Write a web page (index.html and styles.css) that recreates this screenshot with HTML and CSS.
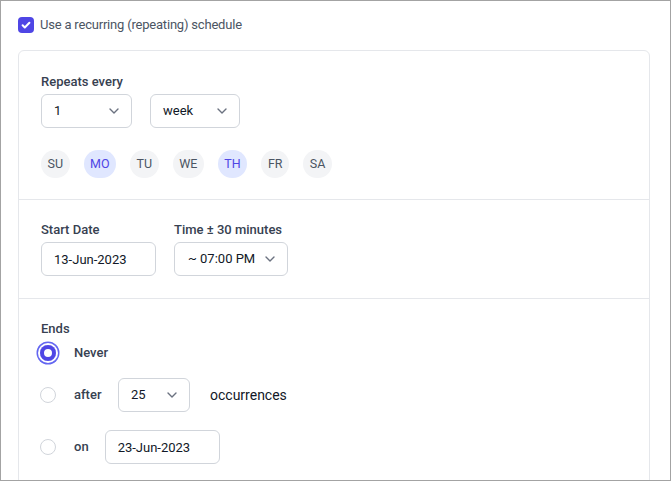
FILE: index.html
```html
<!DOCTYPE html>
<html lang="en">

<head>
  <meta charset="UTF-8">
  <meta name="viewport" content="width=device-width, initial-scale=1.0">
  <title>Recurring Schedule</title>
  <link rel="stylesheet" href="styles.css">
</head>

<body>
  <div class="frame">

    <label class="recurring">
      <span class="checkbox">
        <svg viewBox="0 0 16 16" width="16" height="16">
          <path d="M4.6 8.3l2.2 2.2 4.6-4.7" fill="none" stroke="#fff" stroke-width="2" stroke-linecap="round" stroke-linejoin="round" />
        </svg>
      </span>
      Use a recurring (repeating) schedule
    </label>

    <div class="card">

      <section class="block block-repeat">
        <div class="label">Repeats every</div>
        <div class="row">
          <div class="select select-count">
            <span>1</span>
            <svg class="chevron" viewBox="0 0 10 6" width="10" height="6"><path d="M1 1l4 4 4-4" /></svg>
          </div>
          <div class="select select-unit">
            <span>week</span>
            <svg class="chevron" viewBox="0 0 10 6" width="10" height="6"><path d="M1 1l4 4 4-4" /></svg>
          </div>
        </div>
        <div class="days">
          <span class="day">SU</span>
          <span class="day active">MO</span>
          <span class="day">TU</span>
          <span class="day">WE</span>
          <span class="day active">TH</span>
          <span class="day">FR</span>
          <span class="day">SA</span>
        </div>
      </section>

      <section class="block block-start">
        <div class="row">
          <div class="field">
            <div class="label">Start Date</div>
            <input class="input input-date" type="text" value="13-Jun-2023" />
          </div>
          <div class="field">
            <div class="label">Time ± 30 minutes</div>
            <div class="select select-time">
              <span>~ 07:00 PM</span>
              <svg class="chevron" viewBox="0 0 10 6" width="10" height="6"><path d="M1 1l4 4 4-4" /></svg>
            </div>
          </div>
        </div>
      </section>

      <section class="block block-ends">
        <div class="label">Ends</div>

        <div class="option option-never">
          <span class="radio checked"></span>
          <span class="option-text">Never</span>
        </div>

        <div class="option option-after">
          <span class="radio"></span>
          <span class="option-text">after</span>
          <div class="select select-times">
            <span>25</span>
            <svg class="chevron" viewBox="0 0 10 6" width="10" height="6"><path d="M1 1l4 4 4-4" /></svg>
          </div>
          <span class="suffix">occurrences</span>
        </div>

        <div class="option option-on">
          <span class="radio"></span>
          <span class="option-text">on</span>
          <input class="input input-date" type="text" value="23-Jun-2023" />
        </div>
      </section>

    </div>

  </div>
</body>

</html>
```

FILE: styles.css
```css
* {
  padding: 0;
  margin: 0;
  box-sizing: border-box;
}

body {
  font-family: Roboto, "Liberation Sans", sans-serif;
  font-size: 13px;
  line-height: 20px;
  color: #374151;
  background-color: white;
}

.frame {
  width: 671px;
  height: 481px;
  border: 1px solid #a3a3a3;
  padding: 16px 0 0 17px;
  overflow: hidden;
}

.recurring {
  display: flex;
  align-items: center;
  gap: 6px;
  height: 16px;
  color: #4b5563;
  letter-spacing: -0.2px;
}

.checkbox {
  display: flex;
  width: 16px;
  height: 16px;
  border-radius: 4px;
  background-color: #4f46e5;
}

.card {
  width: 632px;
  margin-top: 17px;
  border: 1px solid #e5e7eb;
  border-radius: 6px;
}

.block {
  padding: 20px 22px 22px;
  border-bottom: 1px solid #e5e7eb;
}

.block-repeat {
  padding-top: 21px;
  padding-bottom: 21px;
}

.label {
  font-weight: 500;
  margin-bottom: 2px;
}

.row {
  display: flex;
  gap: 18px;
}

.select,
.input {
  height: 34px;
  border: 1px solid #d1d5db;
  border-radius: 6px;
  padding: 0 12px;
  font: inherit;
  color: #111827;
  background-color: white;
}

.select {
  display: flex;
  align-items: center;
  justify-content: space-between;
}

.chevron path {
  fill: none;
  stroke: #6b7280;
  stroke-width: 1.4;
  stroke-linecap: round;
  stroke-linejoin: round;
}

.select-count {
  width: 91px;
}

.select-unit {
  width: 90px;
}

.select-time {
  width: 114px;
  padding-left: 13px;
}

.select-times {
  width: 72px;
}

.input-date {
  width: 115px;
}

.input:focus-visible {
  outline: none;
}

.days {
  display: flex;
  gap: 14px;
  margin-top: 22px;
}

.day {
  height: 28px;
  min-width: 28px;
  padding: 0 6.5px;
  border-radius: 14px;
  display: flex;
  align-items: center;
  justify-content: center;
  font-size: 12.5px;
  color: #4b5563;
  background-color: #f3f4f6;
}

.day.active {
  color: #4f46e5;
  background-color: #e0e7ff;
}

.option {
  display: flex;
  align-items: center;
}

.option-never {
  height: 24px;
  margin-top: 1px;
}

.option-after {
  margin-top: 13px;
}

.option-on {
  margin-top: 18px;
}

.radio {
  width: 16px;
  height: 16px;
  margin-left: -1px;
  border: 1px solid #d1d5db;
  border-radius: 50%;
  background-color: white;
}

.radio.checked {
  border: 0;
  background-color: #4f46e5;
  box-shadow: inset 0 0 0 4px #4f46e5, inset 0 0 0 8px white, 0 0 0 2px white, 0 0 0 3.5px #6366f1;
}

.option-text {
  margin-left: 18px;
  margin-right: 16px;
  font-weight: 500;
}

.option-after .option-text {
  width: 44px;
  margin-right: 0;
}

.suffix {
  margin-left: 20px;
  font-size: 14px;
  color: #111827;
}
```
